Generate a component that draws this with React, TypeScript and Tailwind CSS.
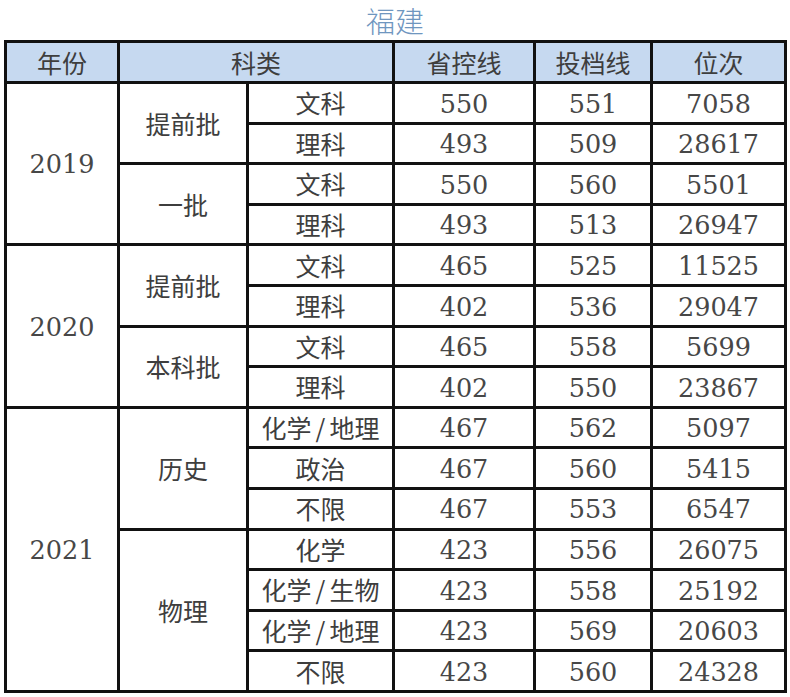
import React from 'react';

type Row = { year?: [string, number]; batch?: [string, number]; subject: string; ctrl: string; line: string; rank: string };

const ROWS: Row[] = [
  { year: ['2019', 4], batch: ['提前批', 2], subject: '文科', ctrl: '550', line: '551', rank: '7058' },
  { subject: '理科', ctrl: '493', line: '509', rank: '28617' },
  { batch: ['一批', 2], subject: '文科', ctrl: '550', line: '560', rank: '5501' },
  { subject: '理科', ctrl: '493', line: '513', rank: '26947' },
  { year: ['2020', 4], batch: ['提前批', 2], subject: '文科', ctrl: '465', line: '525', rank: '11525' },
  { subject: '理科', ctrl: '402', line: '536', rank: '29047' },
  { batch: ['本科批', 2], subject: '文科', ctrl: '465', line: '558', rank: '5699' },
  { subject: '理科', ctrl: '402', line: '550', rank: '23867' },
  { year: ['2021', 7], batch: ['历史', 3], subject: '化学/地理', ctrl: '467', line: '562', rank: '5097' },
  { subject: '政治', ctrl: '467', line: '560', rank: '5415' },
  { subject: '不限', ctrl: '467', line: '553', rank: '6547' },
  { batch: ['物理', 4], subject: '化学', ctrl: '423', line: '556', rank: '26075' },
  { subject: '化学/生物', ctrl: '423', line: '558', rank: '25192' },
  { subject: '化学/地理', ctrl: '423', line: '569', rank: '20603' },
  { subject: '不限', ctrl: '423', line: '560', rank: '24328' },
];

const cjk = "font-['Noto_Sans_CJK_SC','Noto_Sans',sans-serif] font-normal text-[25px]";
const num = "font-['DejaVu_Serif','Liberation_Serif',serif] font-normal text-[25.5px] text-[#474747] pt-[3px]";
const cell = 'border-[3px] border-[#111] text-center align-middle p-0 leading-none text-[#3e3e3e]';

function Subject({ text }: { text: string }) {
  const parts = text.split('/');
  if (parts.length < 2) return <>{text}</>;
  return (
    <>
      {parts[0]}
      <span className="mx-[4px]">/</span>
      {parts[1]}
    </>
  );
}

export default function App() {
  return (
    <div className="w-[790px] h-[697px] bg-white overflow-hidden">
      <div className="h-[40px] flex items-center justify-center text-[29px] leading-none text-[#6f96bf] font-['Noto_Sans_CJK_SC',sans-serif] font-light">
        福建
      </div>
      <table className="ml-[4px] w-[780px] border-collapse border-[3px] border-[#111] table-fixed">
        <colgroup>
          <col className="w-[113px]" />
          <col className="w-[129px]" />
          <col className="w-[146px]" />
          <col className="w-[141px]" />
          <col className="w-[117px]" />
          <col className="w-[134px]" />
        </colgroup>
        <thead>
          <tr className="h-[41px] bg-[#c6d9f0]">
            <th className={`${cell} ${cjk}`}>年份</th>
            <th colSpan={2} className={`${cell} ${cjk}`}>科类</th>
            <th className={`${cell} ${cjk}`}>省控线</th>
            <th className={`${cell} ${cjk}`}>投档线</th>
            <th className={`${cell} ${cjk}`}>位次</th>
          </tr>
        </thead>
        <tbody>
          {ROWS.map((r, i) => (
            <tr key={i} className="h-[40.6px]">
              {r.year && (
                <td rowSpan={r.year[1]} className={`${cell} ${num}`}>{r.year[0]}</td>
              )}
              {r.batch && (
                <td rowSpan={r.batch[1]} className={`${cell} ${cjk}`}>{r.batch[0]}</td>
              )}
              <td className={`${cell} ${cjk} whitespace-nowrap`}>
                <Subject text={r.subject} />
              </td>
              <td className={`${cell} ${num}`}>{r.ctrl}</td>
              <td className={`${cell} ${num}`}>{r.line}</td>
              <td className={`${cell} ${num}`}>{r.rank}</td>
            </tr>
          ))}
        </tbody>
      </table>
    </div>
  );
}
